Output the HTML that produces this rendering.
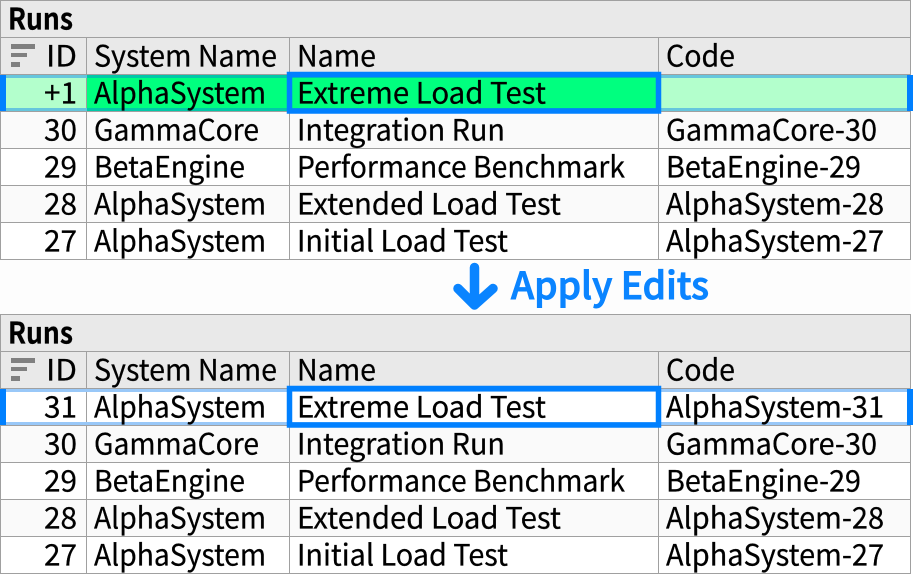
<!DOCTYPE html>
<html><head><meta charset="utf-8"><style>
html,body{margin:0;padding:0;background:#fdfdfd;width:914px;height:574px;overflow:hidden}
svg{display:block}
text{font-family:"Noto Sans CJK JP","Liberation Sans",sans-serif;font-size:29.5px;fill:#000;stroke:#000;stroke-width:.25px;transform:translate(-1px,.5px)}
.b{font-weight:700}
text.a{font-size:37px;font-weight:500;fill:#0a84ff;stroke:#0a84ff;stroke-width:.9px;transform:translate(0,.8px)}
</style></head><body>
<svg width="914" height="574" viewBox="0 0 914 574" xmlns="http://www.w3.org/2000/svg">
<rect width="914" height="574" fill="#fdfdfd"/>
<rect x="910.5" width="4" height="574" fill="#fff"/>
<!-- TOP TABLE -->
<rect x="1" y="1" width="909" height="73" fill="#e9e9e9"/>
<rect x="1" y="75" width="909" height="36" fill="#b3ffcc"/>
<rect x="87" y="75" width="571" height="36" fill="#00ff7f"/>
<rect x="1" y="112" width="909" height="36" fill="#fafafa"/>
<rect x="1" y="149" width="909" height="36" fill="#fff"/>
<rect x="1" y="186" width="909" height="36" fill="#fafafa"/>
<rect x="1" y="223" width="909" height="36" fill="#fff"/>
<g fill="#a0a0a0">
<rect x="0" y="0" width="911" height="1"/><rect x="0" y="37" width="911" height="1"/><rect x="0" y="74" width="911" height="1"/>
<rect x="0" y="111" width="911" height="1"/><rect x="0" y="148" width="911" height="1"/><rect x="0" y="185" width="911" height="1"/><rect x="0" y="222" width="911" height="1"/><rect x="0" y="259" width="911" height="1"/>
<rect x="0" y="0" width="1" height="260"/><rect x="910" y="0" width="1" height="260"/>
<rect x="86" y="38" width="1" height="222"/><rect x="289" y="38" width="1" height="222"/><rect x="658" y="38" width="1" height="222"/>
</g>
<rect x="1" y="75" width="909" height="3" fill="#66c6dd"/><rect x="1" y="108" width="909" height="3" fill="#66c6dd"/>
<rect x="87" y="75" width="571" height="3" fill="#00c8a8"/><rect x="87" y="108" width="571" height="3" fill="#00c8a8"/>
<rect x="0" y="75" width="6" height="36" fill="#0080ff"/><rect x="907" y="75" width="6" height="36" fill="#0080ff"/>
<rect x="289.5" y="74.5" width="369" height="36.5" fill="none" stroke="#0080ff" stroke-width="5.5"/>
<g fill="#808080"><rect x="11" y="44" width="24" height="5"/><rect x="11" y="53" width="16" height="4"/><rect x="11" y="62" width="9" height="5"/></g>
<text class="b" x="9" y="29" textLength="65" lengthAdjust="spacingAndGlyphs">Runs</text>
<text x="47" y="66" textLength="31" lengthAdjust="spacingAndGlyphs">ID</text>
<text x="95" y="66" textLength="183" lengthAdjust="spacingAndGlyphs">System Name</text>
<text x="298" y="66" textLength="79" lengthAdjust="spacingAndGlyphs">Name</text>
<text x="667" y="66" textLength="69" lengthAdjust="spacingAndGlyphs">Code</text>
<text x="45" y="103" textLength="33" lengthAdjust="spacingAndGlyphs">+1</text>
<text x="95" y="103" textLength="172" lengthAdjust="spacingAndGlyphs">AlphaSystem</text>
<text x="298" y="103" textLength="249" lengthAdjust="spacingAndGlyphs">Extreme Load Test</text>
<text x="45" y="140" textLength="33" lengthAdjust="spacingAndGlyphs">30</text>
<text x="95" y="140" textLength="165" lengthAdjust="spacingAndGlyphs">GammaCore</text>
<text x="298" y="140" textLength="208" lengthAdjust="spacingAndGlyphs">Integration Run</text>
<text x="667" y="140" textLength="211" lengthAdjust="spacingAndGlyphs">GammaCore-30</text>
<text x="45" y="177" textLength="33" lengthAdjust="spacingAndGlyphs">29</text>
<text x="95" y="177" textLength="151" lengthAdjust="spacingAndGlyphs">BetaEngine</text>
<text x="298" y="177" textLength="328" lengthAdjust="spacingAndGlyphs">Performance Benchmark</text>
<text x="667" y="177" textLength="195" lengthAdjust="spacingAndGlyphs">BetaEngine-29</text>
<text x="45" y="214" textLength="33" lengthAdjust="spacingAndGlyphs">28</text>
<text x="95" y="214" textLength="172" lengthAdjust="spacingAndGlyphs">AlphaSystem</text>
<text x="298" y="214" textLength="264" lengthAdjust="spacingAndGlyphs">Extended Load Test</text>
<text x="667" y="214" textLength="218" lengthAdjust="spacingAndGlyphs">AlphaSystem-28</text>
<text x="45" y="251" textLength="33" lengthAdjust="spacingAndGlyphs">27</text>
<text x="95" y="251" textLength="172" lengthAdjust="spacingAndGlyphs">AlphaSystem</text>
<text x="298" y="251" textLength="211" lengthAdjust="spacingAndGlyphs">Initial Load Test</text>
<text x="667" y="251" textLength="218" lengthAdjust="spacingAndGlyphs">AlphaSystem-27</text>
<!-- ARROW -->
<path d="M474.5 267.5V305M458 288.5L474.5 305L493 288.5" fill="none" stroke="#0a84ff" stroke-width="9.5" stroke-linecap="round" stroke-linejoin="round"/>
<text class="a" x="511" y="298" textLength="198" lengthAdjust="spacingAndGlyphs">Apply Edits</text>
<!-- BOTTOM TABLE -->
<rect x="1" y="315" width="909" height="73" fill="#e9e9e9"/>
<rect x="1" y="389" width="909" height="36" fill="#fff"/>
<rect x="1" y="426" width="909" height="36" fill="#fafafa"/>
<rect x="1" y="463" width="909" height="36" fill="#fff"/>
<rect x="1" y="500" width="909" height="36" fill="#fafafa"/>
<rect x="1" y="537" width="909" height="36" fill="#fff"/>
<g fill="#a0a0a0">
<rect x="0" y="314" width="911" height="1"/><rect x="0" y="351" width="911" height="1"/><rect x="0" y="388" width="911" height="1"/>
<rect x="0" y="425" width="911" height="1"/><rect x="0" y="462" width="911" height="1"/><rect x="0" y="499" width="911" height="1"/><rect x="0" y="536" width="911" height="1"/><rect x="0" y="573" width="911" height="1"/>
<rect x="0" y="314" width="1" height="260"/><rect x="910" y="314" width="1" height="260"/>
<rect x="86" y="352" width="1" height="222"/><rect x="289" y="352" width="1" height="222"/><rect x="658" y="352" width="1" height="222"/>
</g>
<rect x="1" y="389" width="909" height="3" fill="#99c8f8"/><rect x="1" y="422" width="909" height="3" fill="#99c8f8"/>
<rect x="0" y="389" width="6" height="36" fill="#0080ff"/><rect x="907" y="389" width="6" height="36" fill="#0080ff"/>
<rect x="289.5" y="388.5" width="369" height="36.5" fill="none" stroke="#0080ff" stroke-width="5.5"/>
<g fill="#808080"><rect x="11" y="358" width="24" height="5"/><rect x="11" y="367" width="16" height="4"/><rect x="11" y="376" width="9" height="5"/></g>
<text class="b" x="9" y="343" textLength="65" lengthAdjust="spacingAndGlyphs">Runs</text>
<text x="47" y="380" textLength="31" lengthAdjust="spacingAndGlyphs">ID</text>
<text x="95" y="380" textLength="183" lengthAdjust="spacingAndGlyphs">System Name</text>
<text x="298" y="380" textLength="79" lengthAdjust="spacingAndGlyphs">Name</text>
<text x="667" y="380" textLength="69" lengthAdjust="spacingAndGlyphs">Code</text>
<text x="45" y="417" textLength="33" lengthAdjust="spacingAndGlyphs">31</text>
<text x="95" y="417" textLength="172" lengthAdjust="spacingAndGlyphs">AlphaSystem</text>
<text x="298" y="417" textLength="249" lengthAdjust="spacingAndGlyphs">Extreme Load Test</text>
<text x="667" y="417" textLength="218" lengthAdjust="spacingAndGlyphs">AlphaSystem-31</text>
<text x="45" y="454" textLength="33" lengthAdjust="spacingAndGlyphs">30</text>
<text x="95" y="454" textLength="165" lengthAdjust="spacingAndGlyphs">GammaCore</text>
<text x="298" y="454" textLength="208" lengthAdjust="spacingAndGlyphs">Integration Run</text>
<text x="667" y="454" textLength="211" lengthAdjust="spacingAndGlyphs">GammaCore-30</text>
<text x="45" y="491" textLength="33" lengthAdjust="spacingAndGlyphs">29</text>
<text x="95" y="491" textLength="151" lengthAdjust="spacingAndGlyphs">BetaEngine</text>
<text x="298" y="491" textLength="328" lengthAdjust="spacingAndGlyphs">Performance Benchmark</text>
<text x="667" y="491" textLength="195" lengthAdjust="spacingAndGlyphs">BetaEngine-29</text>
<text x="45" y="528" textLength="33" lengthAdjust="spacingAndGlyphs">28</text>
<text x="95" y="528" textLength="172" lengthAdjust="spacingAndGlyphs">AlphaSystem</text>
<text x="298" y="528" textLength="264" lengthAdjust="spacingAndGlyphs">Extended Load Test</text>
<text x="667" y="528" textLength="218" lengthAdjust="spacingAndGlyphs">AlphaSystem-28</text>
<text x="45" y="565" textLength="33" lengthAdjust="spacingAndGlyphs">27</text>
<text x="95" y="565" textLength="172" lengthAdjust="spacingAndGlyphs">AlphaSystem</text>
<text x="298" y="565" textLength="211" lengthAdjust="spacingAndGlyphs">Initial Load Test</text>
<text x="667" y="565" textLength="218" lengthAdjust="spacingAndGlyphs">AlphaSystem-27</text>
</svg>
</body></html>
